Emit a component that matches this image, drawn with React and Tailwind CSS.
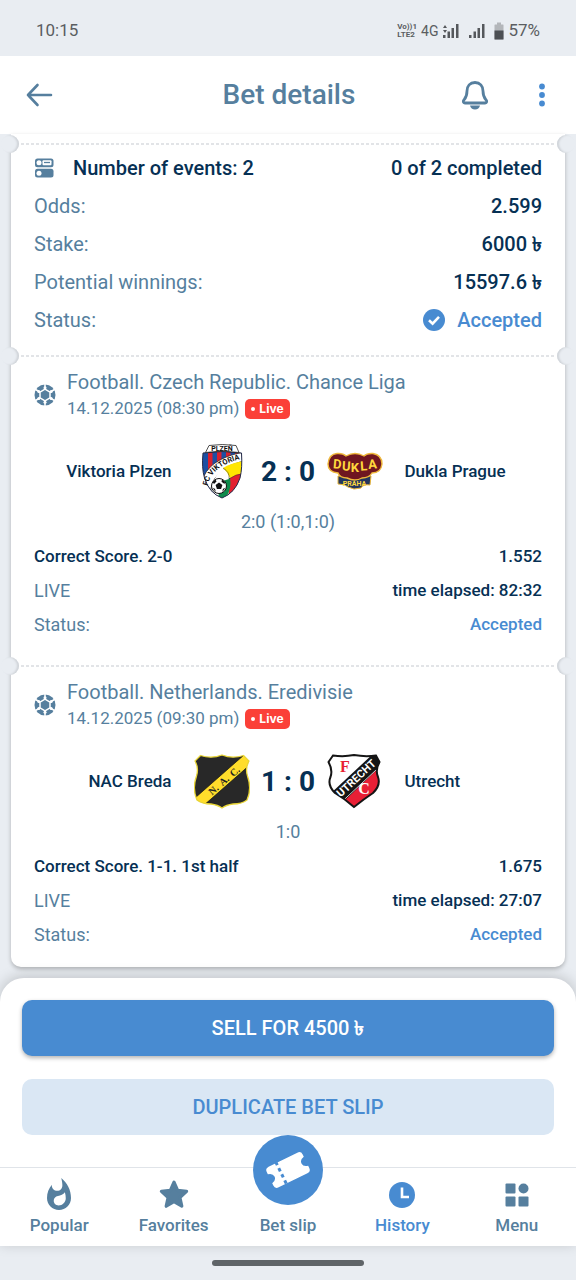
import { MdWhatshot } from "react-icons/md";

const matches = [
  {
    id: 1,
    league: "Football. Czech Republic. Chance Liga",
    date: "14.12.2025 (08:30 pm)",
    home: { name: "Viktoria Plzen", Crest: PlzenCrest },
    away: { name: "Dukla Prague", Crest: DuklaCrest },
    score: "2 : 0",
    periods: "2:0 (1:0,1:0)",
    market: "Correct Score. 2-0",
    odds: "1.552",
    elapsed: "82:32",
  },
  {
    id: 2,
    league: "Football. Netherlands. Eredivisie",
    date: "14.12.2025 (09:30 pm)",
    home: { name: "NAC Breda", Crest: NacCrest },
    away: { name: "Utrecht", Crest: UtrechtCrest },
    score: "1 : 0",
    periods: "1:0",
    market: "Correct Score. 1-1. 1st half",
    odds: "1.675",
    elapsed: "27:07",
  },
];

const navItems = [
  { label: "Popular", Icon: FlameIcon },
  { label: "Favorites", Icon: StarIcon },
  { label: "Bet slip", Icon: null },
  { label: "History", Icon: ClockIcon, active: true },
  { label: "Menu", Icon: MenuIcon },
];

function PlzenCrest() {
  return (
    <svg viewBox="0 0 56 56" className="size-14 shrink-0" role="img" aria-label="Viktoria Plzen">
      <defs>
        <clipPath id="plzen-shield">
          <path d="M9 9Q28 6 47.500 9Q48.500 24 46 34Q41 49 28 54Q15 49 10.500 34Q7.500 24 9 9Z" />
        </clipPath>
        <path id="plzen-arc" d="M13.500 42Q18 21 49 14.500" />
      </defs>
      <g clipPath="url(#plzen-shield)">
        <rect width="56" height="56" fill="#1c4fa3" />
        <path d="M14 0h4.500v40H14zM23 0h4.500v40H23zM32 0h4.500v40H32zM41 0h4.500v40H41z" fill="#d9202e" />
        <path d="M8 38Q13 15 50 8V56H8Z" fill="#fff" stroke="#222" strokeWidth="0.700" />
        <path d="M17 44Q21 24 49 17V56H17Z" fill="#fff" stroke="#222" strokeWidth="0.700" />
        <path d="M29 24Q37 19 49 17V31L36 34Z" fill="#ffe600" />
        <path d="M49 29Q42 30 36 34L34 56H50Z" fill="#e3202f" />
        <path d="M28 34L36 34Q38 44 32 54H24Z" fill="#0f8b4c" />
        <path d="M19 40Q22 30 28 24Q35 28 35 35Z" fill="#fff" />
        <path d="M29 24Q36 28 35 35M35 35Q42 30 48 30" fill="none" stroke="#333" strokeWidth="0.500" />
      </g>
      <circle cx="25" cy="42" r="7.500" fill="#fff" stroke="#111" />
      <path d="M25 38.500l3.400 2.500-1.300 4h-4.200l-1.300-4zM18.500 38l3-2.500 1 2-2.500 2.500zM28 35.500l3 2.500-.5 2-3-2.200zM18.500 44l2.500.8.8 3.200zM31.500 44l-2.500.8-.8 3.200z" fill="#111" />
      <path d="M9 9Q28 6 47.500 9Q48.500 24 46 34Q41 49 28 54Q15 49 10.500 34Q7.500 24 9 9Z" fill="none" stroke="#252a48" strokeWidth="1" />
      <path d="M15 1.500Q28-.5 42 1.500L45 8.500Q28 5.500 11.500 8.500Z" fill="#fff" stroke="#222" strokeWidth="0.800" />
      <text x="28" y="6.800" textAnchor="middle" fontSize="7" fontWeight="700" fill="#111">PLZEŇ</text>
      <text fontSize="7.500" fontWeight="700" fill="#111">
        <textPath href="#plzen-arc">FC VIKTORIA</textPath>
      </text>
    </svg>
  );
}

function DuklaCrest() {
  return (
    <svg viewBox="0 0 56 56" className="size-14 shrink-0" role="img" aria-label="Dukla Prague">
      <path
        d="M11 32L44 32L43 41Q36 40 34 44L27 45L21 43Q18 40 11 40Z"
        fill="#23365e"
        stroke="#e8b63c"
        strokeWidth="1"
      />
      <path
        d="M10 9.500Q16 9 19 12Q28 7 37 12Q40 9 46 9.500Q55 11 55 20Q54 29 45 29Q42 34 35 34Q28 38 20 34Q13 34 11 29Q1 28 1 20Q2 10 10 9.500Z"
        fill="#6f1620"
        stroke="#efb83b"
        strokeWidth="1.400"
      />
      <g fill="#ffd83d" fontWeight="700" textAnchor="middle">
        <text x="10" y="24.500" fontSize="13" transform="rotate(5 10 25)">D</text>
        <text x="19" y="26.500" fontSize="13" transform="rotate(4 19 27)">U</text>
        <text x="28" y="27.500" fontSize="13">K</text>
        <text x="37" y="26.500" fontSize="13" transform="rotate(-4 37 27)">L</text>
        <text x="46" y="24.500" fontSize="13" transform="rotate(-5 46 25)">A</text>
        <text x="27.500" y="41.500" fontSize="7">PRAHA</text>
      </g>
    </svg>
  );
}

function NacCrest() {
  return (
    <svg viewBox="0 0 56 56" className="size-14 shrink-0" role="img" aria-label="NAC Breda">
      <defs>
        <clipPath id="nac-shield">
          <path d="M6.500 1.500Q18 5 28 1Q38 5 49.500 1.500L55 7Q51 14 53.500 22Q58 35 53 46Q48 50 39 50Q32 51 28 54Q24 51 17 50Q8 50 3 46Q-2 35 2.500 22Q5 14 1 7Z" />
        </clipPath>
      </defs>
      <g clipPath="url(#nac-shield)">
        <rect width="56" height="56" fill="#282828" />
        <path d="M1 44L50 1L58 9L9 52Z" fill="#ffdd2b" />
        <path d="M1 44L50 1M9 52L58 9" stroke="#111" strokeWidth="0.700" />
      </g>
      <path
        d="M6.500 1.500Q18 5 28 1Q38 5 49.500 1.500L55 7Q51 14 53.500 22Q58 35 53 46Q48 50 39 50Q32 51 28 54Q24 51 17 50Q8 50 3 46Q-2 35 2.500 22Q5 14 1 7Z"
        fill="none"
        stroke="#e9d637"
        strokeWidth="1.300"
      />
      <g
        textAnchor="middle"
        fontSize="10"
        fontWeight="700"
        fill="#222"
        transform="rotate(-41 30 26.500)"
        className="font-['Liberation_Serif',serif]"
      >
        <text x="16" y="30">N.</text>
        <text x="30" y="30">A.</text>
        <text x="44" y="30">C.</text>
      </g>
    </svg>
  );
}

function UtrechtCrest() {
  return (
    <svg viewBox="0 0 56 56" className="size-14 shrink-0" role="img" aria-label="Utrecht">
      <defs>
        <clipPath id="utrecht-shield">
          <path d="M6 1.500Q17 3 27 1Q38 3 49 1.500L52.500 8Q48 16 51 23Q54 31 46 39Q37 45 27 53Q18 45 8 39Q0 31 3.500 23Q6 16 1.500 8Z" />
        </clipPath>
      </defs>
      <g clipPath="url(#utrecht-shield)">
        <rect width="56" height="56" fill="#fff" />
        <path d="M10 50L56 8V56H10Z" fill="#e81f35" />
        <path d="M2 41L48-2L58 8L13 51Z" fill="#151515" />
        <path d="M13 49.500L56 9.500" stroke="#fff" strokeWidth="0.800" />
      </g>
      <path
        d="M6 1.500Q17 3 27 1Q38 3 49 1.500L52.500 8Q48 16 51 23Q54 31 46 39Q37 45 27 53Q18 45 8 39Q0 31 3.500 23Q6 16 1.500 8Z"
        fill="none"
        stroke="#151515"
        strokeWidth="2"
      />
      <g fontWeight="700" textAnchor="middle">
        <text x="18" y="18" fontSize="16" fill="#e81f35" className="font-['Liberation_Serif',serif]">F</text>
        <text x="37" y="40" fontSize="16" fill="#fff" className="font-['Liberation_Serif',serif]">C</text>
        <text x="29" y="28" fontSize="11" fill="#fff" transform="rotate(-43 29 24)">UTRECHT</text>
      </g>
    </svg>
  );
}

function FlameIcon() {
  return <MdWhatshot className="size-9" />;
}

function StarIcon() {
  return (
    <svg viewBox="0 0 30 30" className="size-8" fill="currentColor" stroke="currentColor" strokeWidth="3" strokeLinejoin="round">
      <path d="M15 3l3.400 7.700 8.400.9-6.300 5.700 1.800 8.200L15 21.300l-7.300 4.200 1.800-8.200-6.300-5.700 8.400-.9z" />
    </svg>
  );
}

function ClockIcon() {
  return (
    <svg viewBox="0 0 26 26" className="size-[26px]">
      <circle cx="13" cy="13" r="13" fill="currentColor" />
      <path d="M13 5.500v9.500h7" fill="none" stroke="#fff" strokeWidth="2.600" />
    </svg>
  );
}

function MenuIcon() {
  return (
    <svg viewBox="0 0 24 24" className="size-6" fill="currentColor">
      <rect x="0.500" y="0.500" width="10" height="10" rx="1" />
      <circle cx="18.500" cy="5.500" r="5" />
      <rect x="0.500" y="13.500" width="10" height="10" rx="1" />
      <rect x="13.500" y="13.500" width="10" height="10" rx="1" />
    </svg>
  );
}

function TicketIcon() {
  return (
    <svg viewBox="0 0 44 44" className="size-11">
      <g transform="rotate(-26 22 22)">
        <path
          d="M6 10.500H38Q42 10.500 42 14.500V17Q37 18 37 22T42 27V29.500Q42 33.500 38 33.500H6Q2 33.500 2 29.500V27Q7 26 7 22T2 17V14.500Q2 10.500 6 10.500Z"
          fill="#fff"
        />
        <path d="M14.500 10v24" stroke="#488bd1" strokeWidth="3" strokeDasharray="3.500 3.300" strokeDashoffset="0.500" />
      </g>
    </svg>
  );
}

function FootballIcon() {
  return (
    <svg viewBox="0 0 22 22" className="size-[22px] shrink-0">
      <circle cx="11" cy="11" r="10.500" fill="#567f9e" />
      <g stroke="#fff" strokeWidth="1.500">
        <path d="M11 0v22M1.500 5.500l19 11M1.500 16.500l19-11" />
        <path d="M11 5.200L16 8.100V13.900L11 16.800L6 13.900V8.100Z" fill="#567f9e" />
      </g>
      <g fill="#fff">
        <circle cx="11" cy="3.800" r="1.500" />
        <circle cx="11" cy="18.200" r="1.500" />
        <circle cx="4.800" cy="7.400" r="1.500" />
        <circle cx="4.800" cy="14.600" r="1.500" />
        <circle cx="17.200" cy="7.400" r="1.500" />
        <circle cx="17.200" cy="14.600" r="1.500" />
      </g>
    </svg>
  );
}

function EventsIcon() {
  return (
    <svg viewBox="0 0 20 20" className="size-5 shrink-0">
      <rect x="1" y="0.500" width="18.500" height="8.800" rx="2.500" fill="#567f9e" />
      <rect x="8.500" y="2.200" width="9" height="5" rx="1" fill="#fff" />
      <path d="M10 4.500h6" stroke="#567f9e" strokeWidth="1.300" />
      <circle cx="5" cy="4.700" r="2.500" fill="#fff" />
      <rect x="1" y="10.800" width="18.500" height="8.800" rx="2.500" fill="#567f9e" />
      <circle cx="5" cy="15.200" r="2.500" fill="#fff" />
    </svg>
  );
}

function SignalIcon({ arrows }) {
  return (
    <svg viewBox="0 0 18 16" className="h-4 w-[18px]" fill="#55585c">
      {arrows && <path d="M3 2L1 5h4zM3 10L1 7h4z" />}
      <rect x="1" y="12" width="2.500" height="3" />
      <rect x="5.500" y="8.500" width="2.500" height="6.500" />
      <rect x="9.500" y="5" width="2.500" height="10" />
      <rect x="14" y="1" width="2.500" height="14" />
    </svg>
  );
}

function StatusBar() {
  return (
    <div className="flex h-14 items-center justify-between px-9 pt-1.5 text-[17px] text-[#5a5d61]">
      <span>10:15</span>
      <div className="flex items-center gap-1">
        <span className="flex flex-col text-[8px] leading-2 font-bold">
          <span>Vo))1</span>
          <span>LTE2</span>
        </span>
        <span className="text-sm">4G</span>
        <SignalIcon arrows />
        <span className="pl-1">
          <SignalIcon />
        </span>
        <svg viewBox="0 0 10 18" className="ml-1 h-[18px] w-2.5">
          <path d="M3 0.500h4v2h2q.5 0 .5.500v14q0 .5-.5.500H1q-.5 0-.5-.5V3q0-.5.500-.5h2z" fill="#b3b6ba" />
          <path d="M0.500 8.500h9V17q0 .5-.5.500H1q-.5 0-.5-.5z" fill="#4c4f53" />
        </svg>
        <span>57%</span>
      </div>
    </div>
  );
}

function Header() {
  return (
    <header className="grid h-[78px] grid-cols-[1fr_auto_1fr] items-center bg-white pr-6 pl-[26px] text-[#567f9e]">
      <button type="button" aria-label="Back" className="justify-self-start">
        <svg viewBox="0 0 30 26" className="h-[26px] w-[30px]" fill="none" stroke="currentColor" strokeWidth="2.600" strokeLinecap="round" strokeLinejoin="round">
          <path d="M25 13H2M11.500 3L2 13l9.500 10" />
        </svg>
      </button>
      <h1 className="text-[28px] font-medium">Bet details</h1>
      <div className="flex items-center justify-end gap-[43px]">
        <button type="button" aria-label="Notifications">
          <svg viewBox="0 0 28 30" className="h-[30px] w-7" fill="none" stroke="currentColor" strokeWidth="2.800" strokeLinejoin="round">
            <path d="M14 2.500C9 2.500 6 6 6 11C6 17 4.500 18 2.500 20.500Q1.800 23 4 23H24Q26.200 23 25.500 20.500C23.500 18 22 17 22 11C22 6 19 2.500 14 2.500Z" />
            <path d="M9 25.500h10q-1 4-5 4t-5-4z" fill="currentColor" stroke="none" />
          </svg>
        </button>
        <button type="button" aria-label="More options" className="text-[#488bd1]">
          <svg viewBox="0 0 20 26" className="h-[26px] w-5" fill="currentColor">
            <circle cx="10" cy="4.500" r="2.900" />
            <circle cx="10" cy="13" r="2.900" />
            <circle cx="10" cy="21.500" r="2.900" />
          </svg>
        </button>
      </div>
    </header>
  );
}

// perforated tear line with a notch cut into each edge of the slip
function TearLine() {
  return (
    <div className="relative mx-2.5 h-0.5 bg-[repeating-linear-gradient(90deg,#e2e4e7_0_3px,transparent_3px_5px)]">
      <span className="absolute -top-2 -left-5 size-[18px] rounded-full bg-[#e9edf2] shadow-[inset_-2px_0_2px_#d0d4d9]"></span>
      <span className="absolute -top-2 -right-5 size-[18px] rounded-full bg-[#e9edf2] shadow-[inset_2px_0_2px_#d0d4d9]"></span>
    </div>
  );
}

function Taka() {
  return <span className="font-bold">৳</span>;
}

function SummaryRow({ label, children }) {
  return (
    <div className="flex h-[38px] items-center justify-between">
      <dt className="text-[#567f9e]">{label}</dt>
      <dd className="font-medium text-[#063054]">{children}</dd>
    </div>
  );
}

function Summary() {
  return (
    <section className="px-[23px] pt-1 pb-4 text-xl">
      <div className="flex h-[38px] items-center justify-between font-medium text-[#063054]">
        <h2 className="flex items-center gap-[19px]">
          <EventsIcon />
          Number of events: 2
        </h2>
        <span>0 of 2 completed</span>
      </div>
      <dl>
        <SummaryRow label="Odds:">2.599</SummaryRow>
        <SummaryRow label="Stake:">
          6000 <Taka />
        </SummaryRow>
        <SummaryRow label="Potential winnings:">
          15597.6 <Taka />
        </SummaryRow>
        <SummaryRow label="Status:">
          <span className="flex items-center gap-3 text-[#488bd1]">
            <svg viewBox="0 0 22 22" className="size-[22px]">
              <circle cx="11" cy="11" r="11" fill="#488bd1" />
              <path d="M6 11.200l3.600 3.400 6.400-6.800" fill="none" stroke="#fff" strokeWidth="2.600" />
            </svg>
            Accepted
          </span>
        </SummaryRow>
      </dl>
    </section>
  );
}

function Match({ match }) {
  const { home, away } = match;
  return (
    <section className="px-[23px] pt-[11px]">
      <div className="flex items-center gap-[11px]">
        <FootballIcon />
        <div>
          <h3 className="text-xl leading-7 text-[#567f9e]">{match.league}</h3>
          <div className="flex h-[26px] items-center gap-1.5">
            <time className="text-[17px] text-[#567f9e]">{match.date}</time>
            <span className="flex h-5 items-center gap-1 rounded-[5px] bg-[#fb4038] px-1.5 font-['Inter',sans-serif] text-xs font-bold text-white">
              <span className="size-1 rounded-full bg-white"></span>
              Live
            </span>
          </div>
        </div>
      </div>
      <div className="mt-[22px] flex items-center">
        <span className="flex-1 pr-[22px] text-right text-[17px] font-medium text-[#063054]">{home.name}</span>
        <home.Crest />
        <span className="w-[77px] text-center text-[28px] leading-9 font-bold text-[#063054]">{match.score}</span>
        <away.Crest />
        <span className="flex-1 pl-[22px] text-[17px] font-medium text-[#063054]">{away.name}</span>
      </div>
      <p className="mt-2.5 text-center text-lg leading-6 text-[#567f9e]">{match.periods}</p>
      <dl className="mt-1.5 text-[17px] font-medium text-[#063054]">
        <div className="flex h-[34px] items-center justify-between">
          <dt>{match.market}</dt>
          <dd>{match.odds}</dd>
        </div>
        <div className="flex h-[34px] items-center justify-between">
          <dt className="text-lg font-normal text-[#567f9e]">LIVE</dt>
          <dd>time elapsed: {match.elapsed}</dd>
        </div>
        <div className="flex h-[34px] items-center justify-between">
          <dt className="text-lg font-normal text-[#567f9e]">Status:</dt>
          <dd className="text-[#488bd1]">Accepted</dd>
        </div>
      </dl>
    </section>
  );
}

function BottomNav() {
  return (
    <nav className="grid grid-cols-5 border-t border-[#e0e4e9] bg-white px-0.5">
      {navItems.map(({ label, Icon, active }) => (
        <a
          key={label}
          href="#"
          className={`relative flex h-[78px] flex-col items-center justify-end pb-[9px] text-[17px] leading-6 font-medium ${
            active ? "text-[#488bd1]" : "text-[#567f9e]"
          }`}
        >
          {Icon ? (
            <span className="flex h-8 items-center">
              <Icon />
            </span>
          ) : (
            <span className="absolute -top-[33px] left-1/2 flex size-[70px] -translate-x-1/2 items-center justify-center rounded-full bg-[#488bd1]">
              <TicketIcon />
            </span>
          )}
          <span className={Icon ? "mt-0.5" : ""}>{label}</span>
        </a>
      ))}
    </nav>
  );
}

export default function App() {
  return (
    <div className="flex min-h-screen flex-col overflow-x-hidden bg-[#e9edf2] font-['Roboto','Noto_Sans',sans-serif]">
      <StatusBar />
      <Header />
      <main className="flex-1 px-[11px] pb-[11px]">
        <div className="rounded-b-[10px] bg-white pt-[9px] pb-[15px] shadow-[0_2px_4px_rgba(0,0,0,0.25)]">
          <TearLine />
          <Summary />
          {matches.map((match, i) => (
            <div key={match.id} className={i > 0 ? "pt-[23px]" : ""}>
              <TearLine />
              <Match match={match} />
            </div>
          ))}
        </div>
      </main>
      <div className="rounded-t-3xl bg-white shadow-[0_-2px_14px_rgba(0,0,0,0.18)]">
        <div className="flex flex-col gap-[23px] px-[22px] pt-[22px] pb-8 text-xl font-medium">
          <button type="button" className="h-14 rounded-[10px] bg-[#488bd1] text-white shadow-[0_2px_4px_rgba(0,0,0,0.3)]">
            SELL FOR 4500 <Taka />
          </button>
          <button type="button" className="h-14 rounded-[10px] bg-[#dae7f4] text-[#488bd1]">
            DUPLICATE BET SLIP
          </button>
        </div>
        <BottomNav />
      </div>
      <div className="flex h-[34px] items-center justify-center">
        <span className="h-1.5 w-[152px] rounded-full bg-[#5f6468]"></span>
      </div>
    </div>
  );
}
